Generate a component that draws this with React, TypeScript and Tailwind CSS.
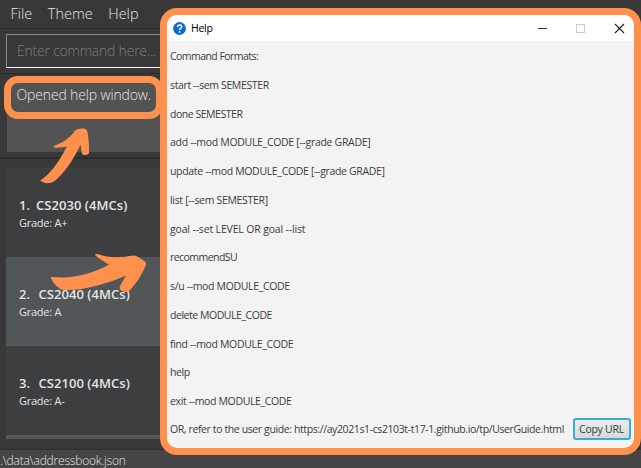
import React from "react";

const commands = [
  { text: "Command Formats:", fit: "tracking-[-0.55px]" },
  { text: "start --sem SEMESTER", fit: "tracking-[-0.37px]" },
  { text: "done SEMESTER", fit: "tracking-[-0.47px]" },
  { text: "add --mod MODULE_CODE [--grade GRADE]", fit: "tracking-[-0.31px]" },
  { text: "update --mod MODULE_CODE [--grade GRADE]", fit: "tracking-[-0.33px]" },
  { text: "list [--sem SEMESTER]", fit: "tracking-[-0.32px]" },
  { text: "goal --set LEVEL OR goal --list", fit: "tracking-[-0.16px]" },
  { text: "recommendSU", fit: "tracking-[-0.55px]" },
  { text: "s/u --mod MODULE_CODE", fit: "tracking-[-0.34px]" },
  { text: "delete MODULE_CODE", fit: "tracking-[-0.46px]" },
  { text: "find --mod MODULE_CODE", fit: "tracking-[-0.34px]" },
  { text: "help", fit: "tracking-[-0.4px]" },
  { text: "exit --mod MODULE_CODE", fit: "tracking-[-0.36px]" },
];

const modules = [
  { id: "1.", name: "CS2030 (4MCs)", grade: "Grade: A+", row: "bg-[#3c3e3f]", idBox: "w-[17px]" },
  { id: "2.", name: "CS2040 (4MCs)", grade: "Grade: A", row: "bg-[#515658]", idBox: "w-[19.5px]" },
  { id: "3.", name: "CS2100 (4MCs)", grade: "Grade: A-", row: "bg-[#3c3e3f]", idBox: "w-[19.5px]" },
];

function MainWindow() {
  return (
    <div className="flex h-full flex-col bg-[#383838] text-[#e4e4e4]">
      <nav className="flex h-[29px] shrink-0 gap-[15.5px] border-b border-[#2b2b2b] pl-[10.5px] text-[14.5px] leading-[27px] font-light">
        <span>File</span>
        <span>Theme</span>
        <span>Help</span>
      </nav>
      <div className="h-[45px] shrink-0 border-b border-[#2b2b2b] pt-[5px] pl-[6px]">
        <div className="h-[34px] w-[200px] border border-[#8a8a8a] border-b-white pl-[10px] text-[14px] leading-[32px] font-light tracking-[-0.22px] text-[#7e7e7e]">
          Enter command here...
        </div>
      </div>
      <div className="h-[85px] shrink-0 border-b-2 border-[#2b2b2b] pt-[6px] pl-[7px]">
        <div className="h-[72px] w-[200px] bg-[#535353] pl-[9.5px] text-[14px] leading-[30px] font-light tracking-[-0.15px]">
          Opened help window.
        </div>
      </div>
      <div className="flex h-[290px] shrink-0 flex-col pt-[9px] pl-[6px]">
        {modules.map((m) => (
          <div key={m.id} className={`h-[89px] w-[200px] shrink-0 pt-[28px] pl-[13px] ${m.row}`}>
            <div className="flex text-[13px] leading-[19px] font-semibold tracking-[0.05px]">
              <span className={m.idBox}>{m.id}</span>
              <span>{m.name}</span>
            </div>
            <div className="text-[11px] leading-[16px] tracking-[-0.25px]">{m.grade}</div>
          </div>
        ))}
        <div className="h-[4px] w-[200px] bg-[#515658]" />
      </div>
      <footer className="h-[19px] border-t border-[#303030] bg-[#454545] text-[12px] leading-[22px] font-light tracking-[-0.2px]">
        .\data\addressbook.json
      </footer>
    </div>
  );
}

function HelpWindow() {
  return (
    <section className="absolute top-[8px] left-[160px] flex h-[447px] w-[481px] flex-col overflow-hidden rounded-[17px] border-[7px] border-[#ff914d] bg-[#f3f3f3] text-[#3b3b3b]">
      <header className="flex h-[26px] shrink-0 items-center bg-white pl-[6px]">
        <svg className="size-[13px]" viewBox="0 0 13 13">
          <circle cx="6.5" cy="6.5" r="6.4" fill="#1268d0" />
          <path d="M4.500 5.100c0-2.900 4.200-2.800 4.200-.3 0 1.500-2.100 1.600-2.100 3.100" fill="none" stroke="#fff" strokeWidth="1.5" />
          <circle cx="6.6" cy="9.9" r=".9" fill="#fff" />
        </svg>
        <span className="ml-[5px] pt-px text-[10.5px] tracking-[-0.3px] text-black">Help</span>
        <svg className="ml-auto h-[11px] w-[89px]" viewBox="0 0 89 11" fill="none">
          <path d="M0 5.5h9" stroke="#333" />
          <rect x="38.500" y="1.500" width="8" height="8" stroke="#ccc" />
          <path d="M77 1l9 9M86 1l-9 9" stroke="#222" strokeWidth="1.1" />
        </svg>
        <span className="w-[7px]" />
      </header>
      <div className="flex-1 pl-[3px] text-[10.5px]">
        {commands.map((c) => (
          <p key={c.text} className={`h-[28.75px] leading-[30px] whitespace-pre ${c.fit}`}>
            {c.text}
          </p>
        ))}
        <div className="-mt-px flex items-center">
          <p className="w-[402.5px] shrink-0 leading-[30px] tracking-[-0.39px] whitespace-nowrap">
            OR, refer to the user guide: https://ay2021s1-cs2103t-t17-1.github.io/tp/UserGuide.html
          </p>
          <button className="h-[22px] w-[58px] shrink-0 rounded-[3px] border-2 border-[#35aed2] bg-linear-to-b from-[#ececec] to-[#d8d8d8] text-[10.5px] leading-[18px] tracking-[-0.25px] whitespace-nowrap">
            Copy URL
          </button>
        </div>
      </div>
    </section>
  );
}

export default function App() {
  return (
    <main className="relative h-[468px] w-[641px] overflow-hidden bg-[#383838] font-['Open_Sans','Noto_Sans',sans-serif]">
      <MainWindow />
      <div className="absolute top-[76px] left-[4px] h-[43px] w-[159px] rounded-[14px] border-[7px] border-[#ff914d]" />
      <HelpWindow />
      <svg className="absolute inset-0 h-[468px] w-[641px]" viewBox="0 0 641 468" fill="#ff914d">
        <path d="M40 180.500C50 175 60 160 67 146.500Q60 148 54 147.500C53 147 53.500 146 55 145.500C64 142 70 138 75 130.500Q78 128 84 128.500Q87 129 87.500 132C88.500 139 89.500 146 89 153Q88 155 84 155Q81.500 154.500 81.500 151L80.500 144.500C74 159 64 174 54 181.500Q47 185.500 40 180.500Z" />
        <path d="M51 278.500Q50 277 53 277C74 279 94 273 109 264.500C103 261 98 258 95 255Q95 253.500 98 254C110 259 123 257 134 255.500Q137 255.500 141 259Q147 262 146 265C142 274 137 283 129 291Q125 293 121 290.500Q119 289 120 286L126 275.500C106 284 83 291 63 290Q56 288 51 278.500Z" />
      </svg>
    </main>
  );
}
